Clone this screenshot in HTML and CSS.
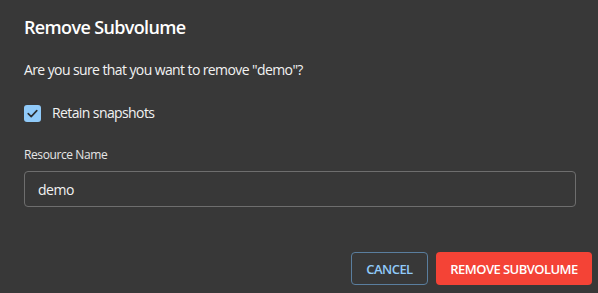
FILE: index.html
```html
<!DOCTYPE html>
<html lang="en">
<head>
    <meta charset="UTF-8">
    <title>Remove Subvolume</title>
    <link rel="stylesheet" href="styles.css">
</head>
<body>
    <div class="dialog">
        <h2 class="dialog-title">Remove Subvolume</h2>
        <div class="dialog-content">
            <p class="message">Are you sure that you want to remove "demo"?</p>
            <label class="check">
                <span class="check-box">
                    <svg width="17" height="17" viewBox="0 0 17 17">
                        <rect x="0" y="0" width="17" height="17" rx="3" fill="#90caf9"/>
                        <polyline points="4.2,8.6 7.2,11.6 12.8,5.6" fill="none" stroke="#2a2d31" stroke-width="1.6" stroke-linecap="round" stroke-linejoin="round"/>
                    </svg>
                </span>
                <span class="check-label">Retain snapshots</span>
            </label>
            <div class="field">
                <div class="field-label">Resource Name</div>
                <div class="field-input">demo</div>
            </div>
        </div>
        <div class="dialog-actions">
            <button class="btn btn-outline">Cancel</button>
            <button class="btn btn-danger">Remove Subvolume</button>
        </div>
    </div>
</body>
</html>
```

FILE: styles.css
```css
html, body {
    margin: 0;
    height: 100%;
    background-color: #383838;
    font-family: "Open Sans", "Noto Sans", sans-serif;
    color: #ffffff;
}
.dialog {
    display: flex;
    flex-direction: column;
    height: 100%;
}
.dialog-title {
    margin: 0;
    padding: 14px 24px 0 24px;
    font-size: 18px;
    font-weight: 600;
    line-height: 26px;
    letter-spacing: -0.65px;
}
.dialog-content {
    padding: 0 22px 0 24px;
    flex: 1;
}
.message {
    margin: 19px 0 0 0;
    font-size: 14px;
    line-height: 22px;
    letter-spacing: -0.6px;
    color: #f2f2f2;
}
.check {
    display: flex;
    align-items: center;
    margin-top: 21px;
    cursor: pointer;
}
.check-box {
    display: flex;
    width: 17px;
    height: 17px;
}
.check-label {
    margin-left: 11px;
    font-size: 14px;
    line-height: 22px;
    letter-spacing: -0.6px;
    color: #f2f2f2;
}
.field {
    margin-top: 23px;
}
.field-label {
    font-size: 12px;
    line-height: 16px;
    letter-spacing: -0.4px;
    color: #e6e6e6;
}
.field-input {
    margin-top: 8px;
    height: 34px;
    border: 1px solid #6e6e6e;
    border-radius: 4px;
    padding: 0 13px;
    display: flex;
    align-items: center;
    font-size: 14px;
    letter-spacing: -0.5px;
    color: #f2f2f2;
}
.dialog-actions {
    display: flex;
    justify-content: flex-end;
    gap: 8px;
    padding: 0 6px 8px 0;
}
.btn {
    height: 33px;
    border-radius: 4px;
    font-family: inherit;
    font-size: 13px;
    font-weight: 600;
    letter-spacing: -0.55px;
    text-transform: uppercase;
    cursor: pointer;
}
.btn-outline {
    width: 77px;
    background: transparent;
    border: 1px solid #5a7e9e;
    color: #90caf9;
}
.btn-danger {
    width: 156px;
    background: #f44336;
    border: none;
    color: #ffffff;
}
```
